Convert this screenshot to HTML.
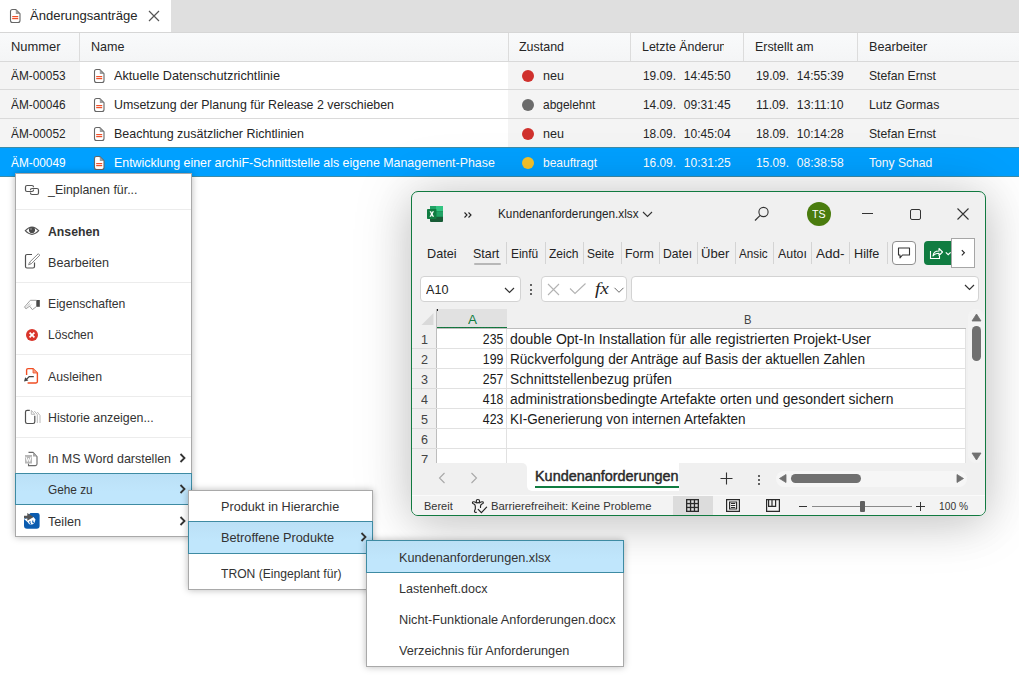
<!DOCTYPE html>
<html><head><meta charset="utf-8"><style>
html,body{margin:0;padding:0}
body{width:1019px;height:679px;position:relative;overflow:hidden;background:#fff;font-family:"Liberation Sans",sans-serif}
.a{position:absolute;box-sizing:border-box}
.t{position:absolute;white-space:nowrap}
svg.a{overflow:visible}
</style></head><body>
<div class="a" style="left:0px;top:0px;width:1019px;height:32px;background:#dfdfdf"></div>
<div class="a" style="left:0px;top:0px;width:171px;height:32px;background:#ffffff"></div>
<svg class="a" style="left:9.5px;top:9px;" width="12" height="15" viewBox="0 0 12 15"><path d="M2.5 0.5 H5.8 L10 4.8 V11.5 Q10 13.5 8 13.5 H2.5 Q0.5 13.5 0.5 11.5 V2.5 Q0.5 0.5 2.5 0.5 Z" fill="#fff" stroke="#666" stroke-width="1.1"/><path d="M5.8 0.8 L9.8 4.9 H5.8 Z" fill="#9e9e9e"/><rect x="2.2" y="7" width="6" height="1.2" fill="#f0502a"/><rect x="2.2" y="9" width="6" height="1.2" fill="#f0502a"/></svg>
<div class="t" style="top:9px;font-size:13px;line-height:13px;color:#262626;left:30.00px;transform:scaleX(1.0049);transform-origin:left top;">Änderungsanträge</div>
<svg class="a" style="left:148px;top:10px;" width="12" height="12" viewBox="0 0 12 12"><path d="M1 1 L11 11 M11 1 L1 11" stroke="#555" stroke-width="1.2"/></svg>
<div class="a" style="left:0px;top:32px;width:1019px;height:1px;background:#d6d6d6"></div>
<div class="a" style="left:0px;top:33px;width:1019px;height:28px;background:linear-gradient(#f9fafb,#f4f5f6)"></div>
<div class="a" style="left:0px;top:61px;width:1019px;height:1px;background:#d9d9d9"></div>
<div class="a" style="left:79px;top:33px;width:1px;height:28px;background:#dcdcdc"></div>
<div class="a" style="left:508px;top:33px;width:1px;height:28px;background:#dcdcdc"></div>
<div class="a" style="left:630px;top:33px;width:1px;height:28px;background:#dcdcdc"></div>
<div class="a" style="left:743px;top:33px;width:1px;height:28px;background:#dcdcdc"></div>
<div class="a" style="left:857px;top:33px;width:1px;height:28px;background:#dcdcdc"></div>
<div class="t" style="top:40px;font-size:13px;line-height:13px;color:#262626;left:10.60px;transform:scaleX(0.9933);transform-origin:left top;">Nummer</div>
<div class="t" style="top:40px;font-size:13px;line-height:13px;color:#262626;left:90.50px;transform:scaleX(0.9660);transform-origin:left top;">Name</div>
<div class="t" style="top:40px;font-size:13px;line-height:13px;color:#262626;left:519.00px;transform:scaleX(0.9580);transform-origin:left top;">Zustand</div>
<div class="a" style="left:641px;top:33px;width:83px;height:28px;overflow:hidden">
<div class="t" style="top:7px;font-size:13px;line-height:13px;color:#262626;left:0.50px;transform:scaleX(0.9550);transform-origin:left top;">Letzte Änderung</div>
</div>
<div class="t" style="top:40px;font-size:13px;line-height:13px;color:#262626;left:754.50px;transform:scaleX(0.9527);transform-origin:left top;">Erstellt am</div>
<div class="t" style="top:40px;font-size:13px;line-height:13px;color:#262626;left:868.50px;transform:scaleX(0.9720);transform-origin:left top;">Bearbeiter</div>
<div class="a" style="left:0px;top:62px;width:80px;height:27px;background:#f4f4f4"></div>
<div class="a" style="left:80px;top:62px;width:428px;height:27px;background:#ffffff"></div>
<div class="a" style="left:508px;top:62px;width:511px;height:27px;background:#f4f4f4"></div>
<div class="a" style="left:0px;top:89px;width:1019px;height:1px;background:#dadada"></div>
<div class="t" style="top:69px;font-size:13px;line-height:13px;color:#262626;left:11.00px;transform:scaleX(0.9103);transform-origin:left top;">ÄM-00053</div>
<svg class="a" style="left:93.5px;top:69px;" width="12" height="15" viewBox="0 0 12 15"><path d="M2.5 0.5 H5.8 L10 4.8 V11.5 Q10 13.5 8 13.5 H2.5 Q0.5 13.5 0.5 11.5 V2.5 Q0.5 0.5 2.5 0.5 Z" fill="#fff" stroke="#666" stroke-width="1.1"/><path d="M5.8 0.8 L9.8 4.9 H5.8 Z" fill="#9e9e9e"/><rect x="2.2" y="7" width="6" height="1.2" fill="#f0502a"/><rect x="2.2" y="9" width="6" height="1.2" fill="#f0502a"/></svg>
<div class="t" style="top:69px;font-size:13px;line-height:13px;color:#262626;left:114.00px;transform:scaleX(0.9776);transform-origin:left top;">Aktuelle Datenschutzrichtlinie</div>
<div class="a" style="left:522px;top:70px;width:12px;height:12px;border-radius:50%;background:#d0312d"></div>
<div class="t" style="top:69px;font-size:13px;line-height:13px;color:#262626;left:543.30px;transform:scaleX(0.9682);transform-origin:left top;">neu</div>
<div class="t" style="top:69px;font-size:13px;line-height:13px;color:#262626;left:642.50px;transform:scaleX(0.9130);transform-origin:left top;">19.09.</div>
<div class="t" style="top:69px;font-size:13px;line-height:13px;color:#262626;right:288.00px;transform:scaleX(0.9248);transform-origin:right top;">14:45:50</div>
<div class="t" style="top:69px;font-size:13px;line-height:13px;color:#262626;left:755.50px;transform:scaleX(0.9130);transform-origin:left top;">19.09.</div>
<div class="t" style="top:69px;font-size:13px;line-height:13px;color:#262626;right:175.00px;transform:scaleX(0.9248);transform-origin:right top;">14:55:39</div>
<div class="t" style="top:69px;font-size:13px;line-height:13px;color:#262626;left:868.50px;transform:scaleX(0.9366);transform-origin:left top;">Stefan Ernst</div>
<div class="a" style="left:0px;top:90px;width:80px;height:28px;background:#f4f4f4"></div>
<div class="a" style="left:80px;top:90px;width:428px;height:28px;background:#ffffff"></div>
<div class="a" style="left:508px;top:90px;width:511px;height:28px;background:#f4f4f4"></div>
<div class="a" style="left:0px;top:118px;width:1019px;height:1px;background:#dadada"></div>
<div class="t" style="top:98px;font-size:13px;line-height:13px;color:#262626;left:11.00px;transform:scaleX(0.9103);transform-origin:left top;">ÄM-00046</div>
<svg class="a" style="left:93.5px;top:98px;" width="12" height="15" viewBox="0 0 12 15"><path d="M2.5 0.5 H5.8 L10 4.8 V11.5 Q10 13.5 8 13.5 H2.5 Q0.5 13.5 0.5 11.5 V2.5 Q0.5 0.5 2.5 0.5 Z" fill="#fff" stroke="#666" stroke-width="1.1"/><path d="M5.8 0.8 L9.8 4.9 H5.8 Z" fill="#9e9e9e"/><rect x="2.2" y="7" width="6" height="1.2" fill="#f0502a"/><rect x="2.2" y="9" width="6" height="1.2" fill="#f0502a"/></svg>
<div class="t" style="top:98px;font-size:13px;line-height:13px;color:#262626;left:114.00px;transform:scaleX(0.9520);transform-origin:left top;">Umsetzung der Planung für Release 2 verschieben</div>
<div class="a" style="left:522px;top:99px;width:12px;height:12px;border-radius:50%;background:#6b6b6b"></div>
<div class="t" style="top:98px;font-size:13px;line-height:13px;color:#262626;left:543.30px;transform:scaleX(0.9175);transform-origin:left top;">abgelehnt</div>
<div class="t" style="top:98px;font-size:13px;line-height:13px;color:#262626;left:642.50px;transform:scaleX(0.9130);transform-origin:left top;">14.09.</div>
<div class="t" style="top:98px;font-size:13px;line-height:13px;color:#262626;right:288.00px;transform:scaleX(0.9248);transform-origin:right top;">09:31:45</div>
<div class="t" style="top:98px;font-size:13px;line-height:13px;color:#262626;left:755.50px;transform:scaleX(0.9381);transform-origin:left top;">11.09.</div>
<div class="t" style="top:98px;font-size:13px;line-height:13px;color:#262626;right:175.00px;transform:scaleX(0.9428);transform-origin:right top;">13:11:10</div>
<div class="t" style="top:98px;font-size:13px;line-height:13px;color:#262626;left:868.50px;transform:scaleX(0.9447);transform-origin:left top;">Lutz Gormas</div>
<div class="a" style="left:0px;top:119px;width:80px;height:28px;background:#f4f4f4"></div>
<div class="a" style="left:80px;top:119px;width:428px;height:28px;background:#ffffff"></div>
<div class="a" style="left:508px;top:119px;width:511px;height:28px;background:#f4f4f4"></div>
<div class="a" style="left:0px;top:147px;width:1019px;height:1px;background:#dadada"></div>
<div class="t" style="top:127px;font-size:13px;line-height:13px;color:#262626;left:11.00px;transform:scaleX(0.9103);transform-origin:left top;">ÄM-00052</div>
<svg class="a" style="left:93.5px;top:127px;" width="12" height="15" viewBox="0 0 12 15"><path d="M2.5 0.5 H5.8 L10 4.8 V11.5 Q10 13.5 8 13.5 H2.5 Q0.5 13.5 0.5 11.5 V2.5 Q0.5 0.5 2.5 0.5 Z" fill="#fff" stroke="#666" stroke-width="1.1"/><path d="M5.8 0.8 L9.8 4.9 H5.8 Z" fill="#9e9e9e"/><rect x="2.2" y="7" width="6" height="1.2" fill="#f0502a"/><rect x="2.2" y="9" width="6" height="1.2" fill="#f0502a"/></svg>
<div class="t" style="top:127px;font-size:13px;line-height:13px;color:#262626;left:114.00px;transform:scaleX(0.9596);transform-origin:left top;">Beachtung zusätzlicher Richtlinien</div>
<div class="a" style="left:522px;top:128px;width:12px;height:12px;border-radius:50%;background:#d0312d"></div>
<div class="t" style="top:127px;font-size:13px;line-height:13px;color:#262626;left:543.30px;transform:scaleX(0.9682);transform-origin:left top;">neu</div>
<div class="t" style="top:127px;font-size:13px;line-height:13px;color:#262626;left:642.50px;transform:scaleX(0.9130);transform-origin:left top;">18.09.</div>
<div class="t" style="top:127px;font-size:13px;line-height:13px;color:#262626;right:288.00px;transform:scaleX(0.9248);transform-origin:right top;">10:45:04</div>
<div class="t" style="top:127px;font-size:13px;line-height:13px;color:#262626;left:755.50px;transform:scaleX(0.9130);transform-origin:left top;">18.09.</div>
<div class="t" style="top:127px;font-size:13px;line-height:13px;color:#262626;right:175.00px;transform:scaleX(0.9248);transform-origin:right top;">10:14:28</div>
<div class="t" style="top:127px;font-size:13px;line-height:13px;color:#262626;left:868.50px;transform:scaleX(0.9366);transform-origin:left top;">Stefan Ernst</div>
<div class="a" style="left:0px;top:147px;width:1019px;height:1px;background:#3d8ca8"></div>
<div class="a" style="left:0px;top:148px;width:1019px;height:28px;background:#00a0ff"></div>
<div class="a" style="left:0px;top:176px;width:1019px;height:1px;background:#3d8ca8"></div>
<div class="t" style="top:156px;font-size:13px;line-height:13px;color:#ffffff;left:11.00px;transform:scaleX(0.9103);transform-origin:left top;">ÄM-00049</div>
<svg class="a" style="left:93.5px;top:156px;" width="12" height="15" viewBox="0 0 12 15"><path d="M2.5 0.5 H5.8 L10 4.8 V11.5 Q10 13.5 8 13.5 H2.5 Q0.5 13.5 0.5 11.5 V2.5 Q0.5 0.5 2.5 0.5 Z" fill="#fff" stroke="#666" stroke-width="1.1"/><path d="M5.8 0.8 L9.8 4.9 H5.8 Z" fill="#9e9e9e"/><rect x="2.2" y="7" width="6" height="1.2" fill="#f0502a"/><rect x="2.2" y="9" width="6" height="1.2" fill="#f0502a"/></svg>
<div class="t" style="top:156px;font-size:13px;line-height:13px;color:#ffffff;left:114.00px;transform:scaleX(0.9530);transform-origin:left top;">Entwicklung einer archiF-Schnittstelle als eigene Management-Phase</div>
<div class="a" style="left:522px;top:157px;width:12px;height:12px;border-radius:50%;background:#f4c22b"></div>
<div class="t" style="top:156px;font-size:13px;line-height:13px;color:#ffffff;left:543.30px;transform:scaleX(0.9224);transform-origin:left top;">beauftragt</div>
<div class="t" style="top:156px;font-size:13px;line-height:13px;color:#ffffff;left:642.50px;transform:scaleX(0.9130);transform-origin:left top;">16.09.</div>
<div class="t" style="top:156px;font-size:13px;line-height:13px;color:#ffffff;right:288.00px;transform:scaleX(0.9248);transform-origin:right top;">10:31:25</div>
<div class="t" style="top:156px;font-size:13px;line-height:13px;color:#ffffff;left:755.50px;transform:scaleX(0.9130);transform-origin:left top;">15.09.</div>
<div class="t" style="top:156px;font-size:13px;line-height:13px;color:#ffffff;right:175.00px;transform:scaleX(0.9248);transform-origin:right top;">08:38:58</div>
<div class="t" style="top:156px;font-size:13px;line-height:13px;color:#ffffff;left:868.50px;transform:scaleX(0.9318);transform-origin:left top;">Tony Schad</div>
<div class="a" style="left:411px;top:191px;width:575px;height:325px;border-radius:7px;box-shadow:0 0 60px rgba(0,0,0,0.17),0 10px 40px rgba(0,0,0,0.12);background:#f0f0f0;border:1px solid #117a40"></div>
<svg class="a" style="left:427px;top:206px;" width="16" height="16" viewBox="0 0 16 16"><rect x="3" y="0" width="13" height="16" rx="1" fill="#185c37"/><rect x="3" y="0" width="13" height="5.3" fill="#21a366"/><rect x="9" y="0" width="7" height="5.3" fill="#33c481"/><rect x="3" y="5.3" width="13" height="5.4" fill="#107c41"/><rect x="9" y="5.3" width="7" height="5.4" fill="#21a366"/><rect x="0" y="3" width="9.5" height="10" rx="0.8" fill="#107c41"/><path d="M2.6 5.2 L4.1 5.2 L4.8 6.8 L5.5 5.2 L7 5.2 L5.6 8 L7.1 10.8 L5.6 10.8 L4.8 9.2 L4 10.8 L2.5 10.8 L4 8 Z" fill="#fff"/></svg>
<svg class="a" style="left:463px;top:211px;" width="11" height="8" viewBox="0 0 11 8"><path d="M1.5 1.5 L4 4 L1.5 6.5 M5.5 1.5 L8 4 L5.5 6.5" fill="none" stroke="#222" stroke-width="1.1"/></svg>
<div class="t" style="top:208px;font-size:12.6px;line-height:12.6px;color:#242424;left:497.70px;transform:scaleX(0.9335);transform-origin:left top;">Kundenanforderungen.xlsx</div>
<svg class="a" style="left:642px;top:211px;" width="12" height="7" viewBox="0 0 12 7"><path d="M1 1 L5.5 5.5 L10 1" fill="none" stroke="#333" stroke-width="1.1"/></svg>
<svg class="a" style="left:754px;top:206px;" width="16" height="16" viewBox="0 0 16 16"><circle cx="9.5" cy="6" r="4.6" fill="none" stroke="#333" stroke-width="1.1"/><path d="M6.2 9.3 L1 14.5" stroke="#333" stroke-width="1.2"/></svg>
<div class="a" style="left:807px;top:202px;width:24px;height:24px;border-radius:50%;background:#4a7c0e"></div>
<div class="t" style="top:209px;font-size:11.5px;line-height:11.5px;color:#ffffff;left:812.20px;transform:scaleX(0.9255);transform-origin:left top;">TS</div>
<div class="a" style="left:862px;top:213px;width:11px;height:1px;background:#333"></div>
<div class="a" style="left:910px;top:209px;width:11px;height:11px;border:1px solid #333;border-radius:2px"></div>
<svg class="a" style="left:957px;top:208px;" width="12" height="12" viewBox="0 0 12 12"><path d="M0.5 0.5 L11.5 11.5 M11.5 0.5 L0.5 11.5" stroke="#333" stroke-width="1.1"/></svg>
<div class="t" style="top:247px;font-size:13px;line-height:13px;color:#242424;left:427.00px;transform:scaleX(0.9720);transform-origin:left top;">Datei</div>
<div class="t" style="top:247px;font-size:13px;line-height:13px;color:#242424;left:473.40px;transform:scaleX(0.9580);transform-origin:left top;">Start</div>
<div class="a" style="left:474px;top:263px;width:27px;height:2px;background:#b7b7b7;border-radius:1px"></div>
<div class="a" style="left:506px;top:242px;width:1px;height:22px;background:#d4d4d4"></div>
<div class="a" style="left:545px;top:242px;width:1px;height:22px;background:#d4d4d4"></div>
<div class="a" style="left:583px;top:242px;width:1px;height:22px;background:#d4d4d4"></div>
<div class="a" style="left:621px;top:242px;width:1px;height:22px;background:#d4d4d4"></div>
<div class="a" style="left:659px;top:242px;width:1px;height:22px;background:#d4d4d4"></div>
<div class="a" style="left:697px;top:242px;width:1px;height:22px;background:#d4d4d4"></div>
<div class="a" style="left:735px;top:242px;width:1px;height:22px;background:#d4d4d4"></div>
<div class="a" style="left:773px;top:242px;width:1px;height:22px;background:#d4d4d4"></div>
<div class="a" style="left:811px;top:242px;width:1px;height:22px;background:#d4d4d4"></div>
<div class="a" style="left:849px;top:242px;width:1px;height:22px;background:#d4d4d4"></div>
<div class="a" style="left:887px;top:242px;width:1px;height:22px;background:#d4d4d4"></div>
<div class="t" style="top:247px;font-size:13px;line-height:13px;color:#242424;left:511.30px;transform:scaleX(0.9180);transform-origin:left top;">Einfü</div>
<div class="t" style="top:247px;font-size:13px;line-height:13px;color:#242424;left:549.33px;transform:scaleX(0.9280);transform-origin:left top;">Zeich</div>
<div class="t" style="top:247px;font-size:13px;line-height:13px;color:#242424;left:587.36px;transform:scaleX(0.9180);transform-origin:left top;">Seite</div>
<div class="t" style="top:247px;font-size:13px;line-height:13px;color:#242424;left:625.39px;transform:scaleX(0.9529);transform-origin:left top;">Form</div>
<div class="t" style="top:247px;font-size:13px;line-height:13px;color:#242424;left:663.42px;transform:scaleX(0.9333);transform-origin:left top;">Dateı</div>
<div class="t" style="top:247px;font-size:13px;line-height:13px;color:#242424;left:701.45px;transform:scaleX(1.0043);transform-origin:left top;">Über</div>
<div class="t" style="top:247px;font-size:13px;line-height:13px;color:#242424;left:739.48px;transform:scaleX(0.8997);transform-origin:left top;">Ansic</div>
<div class="t" style="top:247px;font-size:13px;line-height:13px;color:#242424;left:777.51px;transform:scaleX(0.9521);transform-origin:left top;">Autoı</div>
<div class="t" style="top:247px;font-size:13px;line-height:13px;color:#242424;left:815.54px;transform:scaleX(1.0379);transform-origin:left top;">Add-</div>
<div class="t" style="top:247px;font-size:13px;line-height:13px;color:#242424;left:853.57px;transform:scaleX(0.9728);transform-origin:left top;">Hilfe</div>
<div class="a" style="left:892px;top:241px;width:24px;height:24px;background:#fff;border:1px solid #8f8f8f;border-radius:4px"></div>
<svg class="a" style="left:897px;top:247px;" width="14" height="12" viewBox="0 0 14 12"><path d="M1.5 1 H12.5 V8 H5.5 L3 10.8 V8 H1.5 Z" fill="none" stroke="#333" stroke-width="1.1" stroke-linejoin="round"/></svg>
<div class="a" style="left:924px;top:241px;width:34px;height:24px;background:#107c41;border-radius:4px"></div>
<svg class="a" style="left:929px;top:246px;" width="20" height="14" viewBox="0 0 20 14"><path d="M1.5 5 V12.5 H10.5 V10" fill="none" stroke="#fff" stroke-width="1.1"/><path d="M4 10 Q4.5 5 10 5 V2.5 L13.5 6 L10 9.5 V7.2 Q6 7.2 4 10 Z" fill="none" stroke="#fff" stroke-width="1.1" stroke-linejoin="round"/><path d="M16.8 6.3 L19.2 8.7 L21.6 6.3" fill="none" stroke="#fff" stroke-width="1.2"/></svg>
<div class="a" style="left:951px;top:238px;width:24px;height:30px;background:#fff;border:1px solid #a6a6a6"></div>
<svg class="a" style="left:960px;top:249px;" width="6" height="8" viewBox="0 0 6 8"><path d="M1.8 1.2 L4.4 3.8 L1.8 6.4" fill="none" stroke="#222" stroke-width="1.1"/></svg>
<div class="a" style="left:420px;top:276px;width:101px;height:26px;background:#fff;border:1px solid #d3d3d3;border-radius:4px"></div>
<div class="t" style="top:283px;font-size:13.5px;line-height:13.5px;color:#242424;left:425.60px;transform:scaleX(0.9367);transform-origin:left top;">A10</div>
<svg class="a" style="left:504px;top:287px;" width="12" height="7" viewBox="0 0 12 7"><path d="M1 1 L5.5 5.5 L10 1" fill="none" stroke="#333" stroke-width="1.2"/></svg>
<div class="a" style="left:530px;top:284px;width:2.2px;height:2.2px;border-radius:50%;background:#333"></div>
<div class="a" style="left:530px;top:288.5px;width:2.2px;height:2.2px;border-radius:50%;background:#333"></div>
<div class="a" style="left:530px;top:293px;width:2.2px;height:2.2px;border-radius:50%;background:#333"></div>
<div class="a" style="left:541px;top:276px;width:86px;height:26px;background:#fff;border:1px solid #d3d3d3;border-radius:4px"></div>
<svg class="a" style="left:547px;top:283px;" width="14" height="13" viewBox="0 0 14 13"><path d="M1 1 L12 12 M12 1 L1 12" stroke="#b3b3b3" stroke-width="1.1"/></svg>
<svg class="a" style="left:569px;top:283px;" width="18" height="13" viewBox="0 0 18 13"><path d="M1 5.5 L6 10.5 L16.5 0.5" fill="none" stroke="#b3b3b3" stroke-width="1.1"/></svg>
<div class="t" style="top:280px;font-size:17px;line-height:17px;color:#222;font-style:italic;font-family:'Liberation Serif',serif;left:594.50px;transform:scaleX(1.1344);transform-origin:left top;">fx</div>
<svg class="a" style="left:614px;top:287px;" width="11" height="7" viewBox="0 0 11 7"><path d="M0.5 0.8 L5 5.3 L9.5 0.8" fill="none" stroke="#6a6a6a" stroke-width="1"/></svg>
<div class="a" style="left:631px;top:276px;width:348px;height:26px;background:#fff;border:1px solid #d3d3d3;border-radius:4px"></div>
<svg class="a" style="left:964px;top:284px;" width="12" height="7" viewBox="0 0 12 7"><path d="M1 1 L5.5 5.5 L10 1" fill="none" stroke="#333" stroke-width="1.2"/></svg>
<svg class="a" style="left:421px;top:312px;" width="13" height="14" viewBox="0 0 13 14"><path d="M12.5 1 V13 H0.5 Z" fill="#d9d9d9"/></svg>
<div class="a" style="left:436px;top:309px;width:71px;height:19px;background:#e1e1e1"></div>
<div class="a" style="left:436px;top:327px;width:71px;height:2px;background:repeating-linear-gradient(90deg,#107c41 0 2px,#1d6b3a 2px 3px)"></div>
<div class="a" style="left:436px;top:309px;width:2px;height:2px;background:#222"></div>
<div class="t" style="top:313px;font-size:13px;line-height:13px;color:#107c41;left:467.50px;transform:scaleX(1.0379);transform-origin:left top;">A</div>
<div class="t" style="top:314px;font-size:12px;line-height:12px;color:#444;left:743.50px;transform:scaleX(0.9370);transform-origin:left top;">B</div>
<div class="a" style="left:436px;top:328px;width:530px;height:1px;background:#bdbdbd"></div>
<div class="a" style="left:436px;top:329px;width:530px;height:134px;background:#fff"></div>
<div class="a" style="left:412px;top:329px;width:24px;height:134px;background:#f0f0f0"></div>
<div class="a" style="left:436px;top:309px;width:1px;height:154px;background:#bdbdbd"></div>
<div class="a" style="left:506px;top:329px;width:1px;height:134px;background:#e1e1e1"></div>
<div class="a" style="left:965px;top:329px;width:1px;height:134px;background:#e1e1e1"></div>
<div class="a" style="left:436px;top:348px;width:530px;height:1px;background:#e1e1e1"></div>
<div class="a" style="left:412px;top:348px;width:24px;height:1px;background:#dcdcdc"></div>
<div class="a" style="left:436px;top:368px;width:530px;height:1px;background:#e1e1e1"></div>
<div class="a" style="left:412px;top:368px;width:24px;height:1px;background:#dcdcdc"></div>
<div class="a" style="left:436px;top:388px;width:530px;height:1px;background:#e1e1e1"></div>
<div class="a" style="left:412px;top:388px;width:24px;height:1px;background:#dcdcdc"></div>
<div class="a" style="left:436px;top:408px;width:530px;height:1px;background:#e1e1e1"></div>
<div class="a" style="left:412px;top:408px;width:24px;height:1px;background:#dcdcdc"></div>
<div class="a" style="left:436px;top:428px;width:530px;height:1px;background:#e1e1e1"></div>
<div class="a" style="left:412px;top:428px;width:24px;height:1px;background:#dcdcdc"></div>
<div class="a" style="left:436px;top:448px;width:530px;height:1px;background:#e1e1e1"></div>
<div class="a" style="left:412px;top:448px;width:24px;height:1px;background:#dcdcdc"></div>
<div class="t" style="top:333px;font-size:13px;line-height:13px;color:#444;left:421.00px;transform:scaleX(0.9682);transform-origin:left top;">1</div>
<div class="t" style="top:353px;font-size:13px;line-height:13px;color:#444;left:421.00px;transform:scaleX(0.9682);transform-origin:left top;">2</div>
<div class="t" style="top:373px;font-size:13px;line-height:13px;color:#444;left:421.00px;transform:scaleX(0.9682);transform-origin:left top;">3</div>
<div class="t" style="top:393px;font-size:13px;line-height:13px;color:#444;left:421.00px;transform:scaleX(0.9682);transform-origin:left top;">4</div>
<div class="t" style="top:413px;font-size:13px;line-height:13px;color:#444;left:421.00px;transform:scaleX(0.9682);transform-origin:left top;">5</div>
<div class="t" style="top:433px;font-size:13px;line-height:13px;color:#444;left:421.00px;transform:scaleX(0.9682);transform-origin:left top;">6</div>
<div class="a" style="left:412px;top:449px;width:24px;height:14px;overflow:hidden">
<div class="t" style="left:9px;top:4px;font-size:13px;line-height:13px;color:#444">7</div>
</div>
<div class="t" style="top:332px;font-size:14px;line-height:14px;color:#1a1a1a;right:515.50px;transform:scaleX(0.8776);transform-origin:right top;">235</div>
<div class="t" style="top:332px;font-size:14px;line-height:14px;color:#1a1a1a;left:509.50px;transform:scaleX(0.9998);transform-origin:left top;">double Opt-In Installation für alle registrierten Projekt-User</div>
<div class="t" style="top:352px;font-size:14px;line-height:14px;color:#1a1a1a;right:515.50px;transform:scaleX(0.8776);transform-origin:right top;">199</div>
<div class="t" style="top:352px;font-size:14px;line-height:14px;color:#1a1a1a;left:509.50px;transform:scaleX(0.9705);transform-origin:left top;">Rückverfolgung der Anträge auf Basis der aktuellen Zahlen</div>
<div class="t" style="top:372px;font-size:14px;line-height:14px;color:#1a1a1a;right:515.50px;transform:scaleX(0.8776);transform-origin:right top;">257</div>
<div class="t" style="top:372px;font-size:14px;line-height:14px;color:#1a1a1a;left:509.50px;transform:scaleX(0.9818);transform-origin:left top;">Schnittstellenbezug prüfen</div>
<div class="t" style="top:392px;font-size:14px;line-height:14px;color:#1a1a1a;right:515.50px;transform:scaleX(0.8776);transform-origin:right top;">418</div>
<div class="t" style="top:392px;font-size:14px;line-height:14px;color:#1a1a1a;left:509.50px;transform:scaleX(0.9955);transform-origin:left top;">administrationsbedingte Artefakte orten und gesondert sichern</div>
<div class="t" style="top:412px;font-size:14px;line-height:14px;color:#1a1a1a;right:515.50px;transform:scaleX(0.8776);transform-origin:right top;">423</div>
<div class="t" style="top:412px;font-size:14px;line-height:14px;color:#1a1a1a;left:509.50px;transform:scaleX(0.9672);transform-origin:left top;">KI-Generierung von internen Artefakten</div>
<div class="a" style="left:968px;top:309px;width:16px;height:154px;background:#f3f3f3;border-radius:8px"></div>
<svg class="a" style="left:971px;top:313px;" width="11" height="9" viewBox="0 0 11 9"><path d="M5.5 1 L10 8 H1 Z" fill="#707070" stroke="#707070" stroke-width="0.8" stroke-linejoin="round"/></svg>
<div class="a" style="left:972px;top:326px;width:9px;height:35px;background:#707070;border-radius:4.5px"></div>
<svg class="a" style="left:971px;top:452px;" width="11" height="9" viewBox="0 0 11 9"><path d="M5.5 8 L10 1 H1 Z" fill="#707070" stroke="#707070" stroke-width="0.8" stroke-linejoin="round"/></svg>
<div class="a" style="left:412px;top:463px;width:267px;height:8px;background:#fff"></div>
<div class="a" style="left:412px;top:463px;width:115px;height:28px;background:#f0f0f0;border-top-right-radius:5px"></div>
<div class="a" style="left:527px;top:463px;width:152px;height:28px;background:#fff;border-bottom-left-radius:5px"></div>
<div class="a" style="left:679px;top:463px;width:306px;height:32px;background:#f0f0f0"></div>
<div class="a" style="left:412px;top:491px;width:573px;height:4px;background:#f0f0f0"></div>
<svg class="a" style="left:438px;top:472px;" width="8" height="12" viewBox="0 0 8 12"><path d="M6.5 1 L1.5 6 L6.5 11" fill="none" stroke="#a8a8a8" stroke-width="1.1"/></svg>
<svg class="a" style="left:470px;top:472px;" width="8" height="12" viewBox="0 0 8 12"><path d="M1.5 1 L6.5 6 L1.5 11" fill="none" stroke="#a8a8a8" stroke-width="1.1"/></svg>
<div class="a" style="left:527px;top:463px;width:152px;height:28px;overflow:hidden">
<div class="t" style="left:8px;top:6px;font-size:14.5px;line-height:14.5px;color:#2a2a2a;-webkit-text-stroke:0.45px #2a2a2a;transform:scaleX(0.9943);transform-origin:left top">Kundenanforderungen</div>
</div>
<div class="a" style="left:535px;top:486px;width:144px;height:2px;background:#107c41"></div>
<svg class="a" style="left:720px;top:472px;" width="13" height="13" viewBox="0 0 13 13"><path d="M6.5 0.5 V12.5 M0.5 6.5 H12.5" stroke="#333" stroke-width="1.1"/></svg>
<div class="a" style="left:758px;top:474.5px;width:2.2px;height:2.2px;border-radius:50%;background:#333"></div>
<div class="a" style="left:758px;top:478.8px;width:2.2px;height:2.2px;border-radius:50%;background:#333"></div>
<div class="a" style="left:758px;top:483.1px;width:2.2px;height:2.2px;border-radius:50%;background:#333"></div>
<div class="a" style="left:776px;top:471px;width:191px;height:16px;background:#f6f6f6;border-radius:8px"></div>
<svg class="a" style="left:778px;top:473px;" width="10" height="11" viewBox="0 0 10 11"><path d="M1.5 5.5 L8 1.5 V9.5 Z" fill="#707070" stroke="#707070" stroke-width="0.8" stroke-linejoin="round"/></svg>
<div class="a" style="left:791px;top:474px;width:70px;height:9px;background:#707070;border-radius:4.5px"></div>
<svg class="a" style="left:955px;top:473px;" width="10" height="11" viewBox="0 0 10 11"><path d="M8.5 5.5 L2 1.5 V9.5 Z" fill="#707070" stroke="#707070" stroke-width="0.8" stroke-linejoin="round"/></svg>
<div class="a" style="left:412px;top:495px;width:573px;height:1px;background:#fafafa"></div>
<div class="a" style="left:412px;top:496px;width:573px;height:19px;background:#f3f3f3;border-bottom-left-radius:6px;border-bottom-right-radius:6px"></div>
<div class="t" style="top:501px;font-size:11px;line-height:11px;color:#333;left:423.70px;transform:scaleX(0.9988);transform-origin:left top;">Bereit</div>
<svg class="a" style="left:468px;top:496px;" width="22" height="20" viewBox="0 0 22 20"><g fill="none" stroke="#222" stroke-width="1.15" stroke-linecap="round"><circle cx="9.9" cy="5.2" r="1.7"/><path d="M8.3 6.9 Q6 5.2 4.7 6 Q3.9 7.4 5.9 8 Q7.3 8.6 7.3 10.2 V13 Q6.2 15 6.6 15.8 Q7.2 16.6 8.5 16.3"/><path d="M11.5 6.9 Q13.8 5.2 15.1 6 Q15.9 7.4 13.9 8 Q12.5 8.6 12.5 10.2 V11.4"/><path d="M10.2 13.3 L13.4 16.6 L18.6 11.2"/></g></svg>
<div class="t" style="top:501px;font-size:11px;line-height:11px;color:#333;left:490.80px;transform:scaleX(1.0254);transform-origin:left top;">Barrierefreiheit: Keine Probleme</div>
<div class="a" style="left:673px;top:496px;width:40px;height:19px;background:#dcdcdc"></div>
<svg class="a" style="left:686px;top:499px;" width="13" height="13" viewBox="0 0 13 13"><g fill="#2a2a2a"><rect x="0" y="0" width="1.3" height="13"/><rect x="3.9" y="0" width="1.3" height="13"/><rect x="7.8" y="0" width="1.3" height="13"/><rect x="11.7" y="0" width="1.3" height="13"/><rect x="0" y="0" width="13" height="1.3"/><rect x="0" y="3.9" width="13" height="1.3"/><rect x="0" y="7.8" width="13" height="1.3"/><rect x="0" y="11.7" width="13" height="1.3"/></g></svg>
<svg class="a" style="left:726px;top:499px;" width="14" height="13" viewBox="0 0 14 13"><path d="M0.6 0.6 H13.4 V12.4 H0.6 Z M3.6 3 H10.6 V10 H3.6 Z" fill="none" stroke="#2a2a2a" stroke-width="1.2"/><path d="M5 4.5 H9.2 M5 6.5 H9.2 M5 8.5 H9.2" stroke="#2a2a2a" stroke-width="1"/></svg>
<svg class="a" style="left:766px;top:499px;" width="14" height="13" viewBox="0 0 14 13"><path d="M0.6 0.6 H13.4 V12.4 H0.6 Z M2.6 0.6 V7.4 H9.6 V0.6 M6 0.6 V7.4" fill="none" stroke="#2a2a2a" stroke-width="1.2"/></svg>
<div class="a" style="left:799px;top:506px;width:8px;height:1px;background:#333"></div>
<div class="a" style="left:812px;top:506px;width:100px;height:1px;background:#8a8a8a"></div>
<div class="a" style="left:860px;top:501px;width:5px;height:11px;background:#606060;border-radius:1px"></div>
<svg class="a" style="left:916px;top:502px;" width="9" height="9" viewBox="0 0 9 9"><path d="M4.5 0 V9 M0 4.5 H9" stroke="#333" stroke-width="1"/></svg>
<div class="t" style="top:501px;font-size:11px;line-height:11px;color:#333;left:938.70px;transform:scaleX(0.9298);transform-origin:left top;">100 %</div>
<div class="a" style="left:15px;top:173px;width:177px;height:364px;background:#fff;border:1px solid #a9a9a9;box-shadow:0 0 7px rgba(0,0,0,0.28)"></div>
<div class="a" style="left:16px;top:209px;width:175px;height:1px;background:#ececec"></div>
<div class="a" style="left:16px;top:282px;width:175px;height:1px;background:#ececec"></div>
<div class="a" style="left:16px;top:354px;width:175px;height:1px;background:#ececec"></div>
<div class="a" style="left:16px;top:396px;width:175px;height:1px;background:#ececec"></div>
<div class="a" style="left:16px;top:437px;width:175px;height:1px;background:#ececec"></div>
<div class="a" style="left:15px;top:473px;width:177px;height:32px;background:linear-gradient(#bbe0f6,#c0e6fc 60%);border:1px solid #3e8ba3"></div>
<div class="t" style="top:183px;font-size:13px;line-height:13px;color:#333333;left:47.60px;transform:scaleX(0.9525);transform-origin:left top;">_Einplanen für...</div>
<div class="t" style="top:225px;font-size:13px;line-height:13px;color:#333333;font-weight:bold;left:47.60px;transform:scaleX(0.9417);transform-origin:left top;">Ansehen</div>
<div class="t" style="top:256px;font-size:13px;line-height:13px;color:#333333;left:47.60px;transform:scaleX(0.9701);transform-origin:left top;">Bearbeiten</div>
<div class="t" style="top:297px;font-size:13px;line-height:13px;color:#333333;left:47.60px;transform:scaleX(0.9394);transform-origin:left top;">Eigenschaften</div>
<div class="t" style="top:328px;font-size:13px;line-height:13px;color:#333333;left:47.60px;transform:scaleX(0.9257);transform-origin:left top;">Löschen</div>
<div class="t" style="top:370px;font-size:13px;line-height:13px;color:#333333;left:47.60px;transform:scaleX(0.9457);transform-origin:left top;">Ausleihen</div>
<div class="t" style="top:411px;font-size:13px;line-height:13px;color:#333333;left:47.60px;transform:scaleX(0.9498);transform-origin:left top;">Historie anzeigen...</div>
<div class="t" style="top:452px;font-size:13px;line-height:13px;color:#333333;left:47.60px;transform:scaleX(0.9582);transform-origin:left top;">In MS Word darstellen</div>
<div class="t" style="top:483px;font-size:13px;line-height:13px;color:#333333;left:47.60px;transform:scaleX(0.9096);transform-origin:left top;">Gehe zu</div>
<div class="t" style="top:515px;font-size:13px;line-height:13px;color:#333333;left:47.60px;transform:scaleX(0.9715);transform-origin:left top;">Teilen</div>
<svg class="a" style="left:179px;top:453px;" width="8" height="10" viewBox="0 0 8 10"><path d="M1.5 1 L5.5 5 L1.5 9" fill="none" stroke="#333" stroke-width="1.8"/></svg>
<svg class="a" style="left:179px;top:484px;" width="8" height="10" viewBox="0 0 8 10"><path d="M1.5 1 L5.5 5 L1.5 9" fill="none" stroke="#333" stroke-width="1.8"/></svg>
<svg class="a" style="left:179px;top:516px;" width="8" height="10" viewBox="0 0 8 10"><path d="M1.5 1 L5.5 5 L1.5 9" fill="none" stroke="#333" stroke-width="1.8"/></svg>
<svg class="a" style="left:20px;top:178px;" width="24" height="24" viewBox="0 0 24 24"><g fill="none" stroke="#555" stroke-width="1.2"><path d="M13.5 9.3 V9 Q13.5 7.5 12 7.5 H7 Q5.5 7.5 5.5 9 V12 Q5.5 13.5 7 13.5 H12 Q13.5 13.5 13.5 12 V11.6"/><path d="M10.5 14.6 V15 Q10.5 16.5 12 16.5 H17 Q18.5 16.5 18.5 15 V12 Q18.5 10.5 17 10.5 H12 Q10.5 10.5 10.5 12 V12.2"/></g></svg>
<svg class="a" style="left:20px;top:220px;" width="24" height="20" viewBox="0 0 24 20"><path d="M5.3 10.7 Q12 3.2 18.7 10.7 Q12 18 5.3 10.7 Z" fill="none" stroke="#555" stroke-width="1.1"/><circle cx="12" cy="10" r="3.1" fill="#4a4a4a"/><circle cx="11" cy="9" r="0.9" fill="#8a8a8a"/></svg>
<svg class="a" style="left:20px;top:250px;" width="24" height="22" viewBox="0 0 24 22"><path d="M12 4.5 H7 Q5.5 4.5 5.5 6 V16.5 Q5.5 18 7 18 H13 Q14.5 18 14.5 16.5 V12.5" fill="none" stroke="#505050" stroke-width="1.2"/><path d="M18.3 3.7 L19.8 5.2 L11.2 13.8 L8.6 14.8 L9.6 12.2 Z" fill="#fff" stroke="#8a8a8a" stroke-width="1"/><path d="M9.6 12.2 L11.2 13.8" stroke="#8a8a8a" stroke-width="1"/></svg>
<svg class="a" style="left:22px;top:296px;" width="20" height="18" viewBox="0 0 20 18"><path d="M8.3 4.3 H14.5 V10.5 L10.4 13.6 L7.6 10.2 L4.1 12.7 L2.4 11.2 Z" fill="#fff" stroke="#a0a0a0" stroke-width="1"/><path d="M3.5 11.8 L8 7.5 M7.6 10.2 L9.2 8.8" stroke="#8a8a8a" stroke-width="0.9" stroke-dasharray="1 0.8"/><rect x="14.6" y="4" width="3.2" height="6.8" fill="#4a4a4a"/></svg>
<div class="a" style="left:26px;top:329px;width:12px;height:12px;border-radius:50%;background:#d9352b"></div>
<svg class="a" style="left:26px;top:329px;" width="12" height="12" viewBox="0 0 12 12"><path d="M3.6 3.6 L8.4 8.4 M8.4 3.6 L3.6 8.4" stroke="#fff" stroke-width="1.7"/></svg>
<svg class="a" style="left:22px;top:366px;" width="20" height="20" viewBox="0 0 20 20"><path d="M4.6 9 V4 Q4.6 2.6 6 2.6 H11 L15.4 7 V15.6 Q15.4 17 14 17 H5.6" fill="none" stroke="#f04e23" stroke-width="1.4"/><path d="M11 2.8 V7 H15.2" fill="#f6a184" stroke="#f04e23" stroke-width="0.8"/><path d="M11.8 10.6 H7.2 L4.2 13.6" fill="none" stroke="#444" stroke-width="1.3"/><path d="M2 15.6 L3.2 11.2 L6.4 14.4 Z" fill="#444"/></svg>
<svg class="a" style="left:22px;top:407px;" width="20" height="20" viewBox="0 0 20 20"><path d="M7.8 3.3 H5.2 Q3.5 3.3 3.5 5 V14.8 Q3.5 16.5 5.2 16.5 H11.1 Q12.8 16.5 12.8 14.8 V8.8" fill="none" stroke="#505050" stroke-width="1.2"/><path d="M9.3 3.3 L12.8 7.3 H9.3 Z M12.3 4 L15.3 7.5 V16 M15.3 5 L18 8.5 V16" fill="none" stroke="#b8b8b8" stroke-width="1"/></svg>
<svg class="a" style="left:22px;top:448px;" width="20" height="20" viewBox="0 0 20 20"><path d="M6.5 4.4 H11 L15 8.6 V16 Q15 17.6 13.4 17.6 H6.5 V15.5" fill="#fff" stroke="#6a6a6a" stroke-width="1.1"/><path d="M11 4.4 L15 8.6 H11 Z" fill="#a8a8a8"/><rect x="3" y="7" width="7" height="8.5" fill="#b8b8b8"/><path d="M4 8.8 L5.3 13.5 L6.5 10.2 L7.7 13.5 L9 8.8" fill="none" stroke="#fff" stroke-width="1"/></svg>
<svg class="a" style="left:21px;top:510px;" width="22" height="22" viewBox="0 0 22 22"><path d="M9.5 3 H16.5 Q18.6 3 18.6 5 V15.8 Q18.6 18.8 15.6 18.8 H6 Q3 18.8 3 15.8 V9 Z" fill="#0b5cb0"/><path d="M3 9 L7 12.5 Q8 15 10 14.3 Q12 15 13.5 12.8 L14.5 9.5 L12.5 7 Z" fill="#fff"/><path d="M9 11 Q8.5 13.5 10 13.5 M11.8 10.5 Q11.5 13.5 13 12.5" fill="none" stroke="#0b5cb0" stroke-width="1.1"/><path d="M3 5.8 H6.3 V3 L12.6 7 L6.3 10.8 V8.2 H3 Z" fill="#555"/></svg>
<div class="a" style="left:188px;top:490px;width:185px;height:100px;background:#fff;border:1px solid #a9a9a9;box-shadow:0 0 7px rgba(0,0,0,0.28)"></div>
<div class="a" style="left:188px;top:521px;width:185px;height:33px;background:linear-gradient(#bbe0f6,#c0e6fc 60%);border:1px solid #3e8ba3"></div>
<div class="t" style="top:500px;font-size:13px;line-height:13px;color:#333333;left:220.80px;transform:scaleX(0.9737);transform-origin:left top;">Produkt in Hierarchie</div>
<div class="t" style="top:531px;font-size:13px;line-height:13px;color:#333333;left:220.80px;transform:scaleX(0.9792);transform-origin:left top;">Betroffene Produkte</div>
<div class="t" style="top:567px;font-size:13px;line-height:13px;color:#333333;left:220.80px;transform:scaleX(0.9318);transform-origin:left top;">TRON (Eingeplant für)</div>
<svg class="a" style="left:360px;top:532px;" width="8" height="10" viewBox="0 0 8 10"><path d="M1.5 1 L5.5 5 L1.5 9" fill="none" stroke="#333" stroke-width="1.8"/></svg>
<div class="a" style="left:366px;top:540px;width:258px;height:127px;background:#fff;border:1px solid #a9a9a9;box-shadow:0 0 7px rgba(0,0,0,0.28)"></div>
<div class="a" style="left:366px;top:540px;width:258px;height:33px;background:linear-gradient(#bbe0f6,#c0e6fc 60%);border:1px solid #3e8ba3"></div>
<div class="t" style="top:551px;font-size:13px;line-height:13px;color:#333333;left:398.50px;transform:scaleX(0.9762);transform-origin:left top;">Kundenanforderungen.xlsx</div>
<div class="t" style="top:582px;font-size:13px;line-height:13px;color:#333333;left:398.50px;transform:scaleX(0.9642);transform-origin:left top;">Lastenheft.docx</div>
<div class="t" style="top:613px;font-size:13px;line-height:13px;color:#333333;left:398.50px;transform:scaleX(0.9790);transform-origin:left top;">Nicht-Funktionale Anforderungen.docx</div>
<div class="t" style="top:644px;font-size:13px;line-height:13px;color:#333333;left:398.50px;transform:scaleX(0.9778);transform-origin:left top;">Verzeichnis für Anforderungen</div>
</body></html>
